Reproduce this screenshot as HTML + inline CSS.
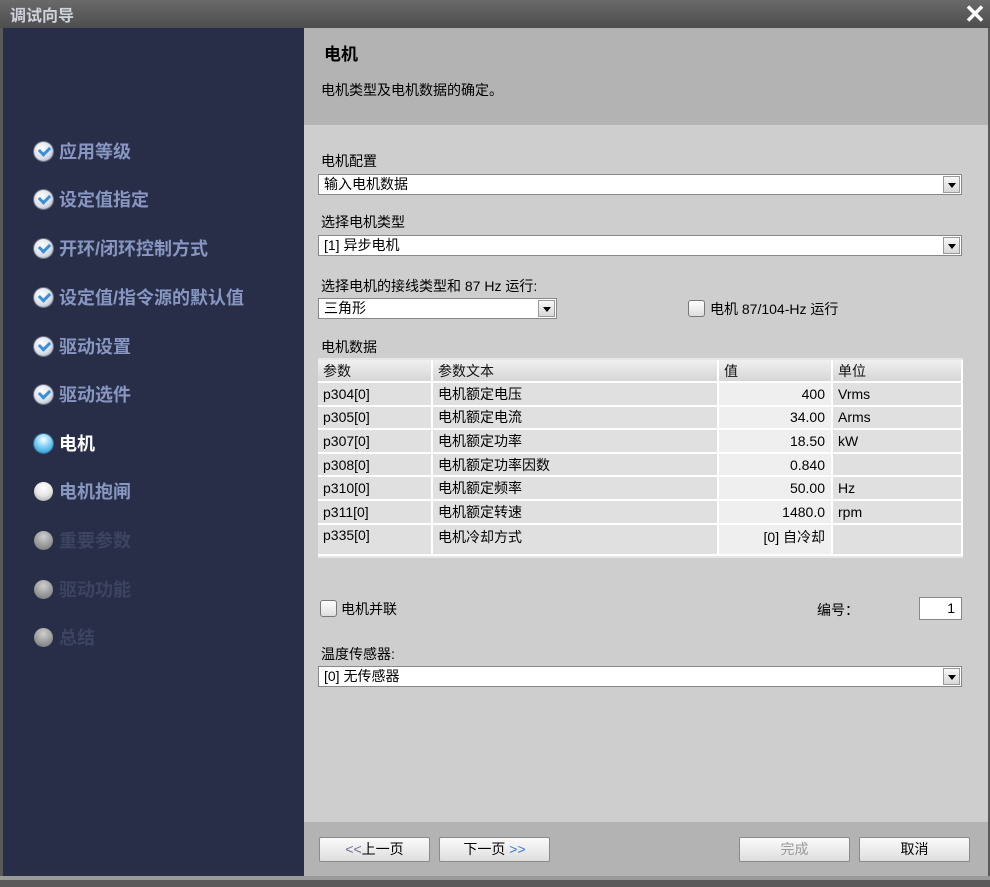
<!DOCTYPE html>
<html><head><meta charset="utf-8"><style>
*{margin:0;padding:0;box-sizing:border-box}
body{width:990px;height:887px;position:relative;overflow:hidden;background:#5a5a5a;font-family:"Liberation Sans","Noto Sans CJK SC",sans-serif;font-size:14px;color:#000}
.a{position:absolute}
.nav{position:absolute;left:34px;font-size:18px;font-weight:bold;color:#8797c2;display:flex;align-items:center;gap:6px}
.dot{width:19px;height:19px;border-radius:50%;display:inline-block;position:relative}
.ck{background:radial-gradient(circle at 40% 35%,#fff,#d8dde6 60%,#8c95a4);box-shadow:0 0 0 1px #6c7383}
.ck:after{content:"";position:absolute;left:5px;top:4px;width:8px;height:5px;border-left:3px solid #3a8fd8;border-bottom:3px solid #3a8fd8;transform:rotate(-45deg)}
.cur{background:radial-gradient(circle at 50% 30%,#fff,#7fd0f5 45%,#1b8ec9);box-shadow:0 0 0 1px #3a6c90}
.wh{background:radial-gradient(circle at 50% 30%,#fff,#e6e6e6 50%,#9a9a9a)}
.gr{background:radial-gradient(circle at 50% 30%,#cfcfcf,#9a9a9a 55%,#6f6f6f)}
.lbl{position:absolute;left:321px;font-size:14px}
.sel{position:absolute;background:#fff;border:1px solid #888;height:21px;font-size:14px;line-height:19px;padding-left:5px}
.sel i{position:absolute;right:1px;top:1px;width:17px;height:17px;background:linear-gradient(#f8f8f8,#d8d8d8);border:1px solid #999}
.sel i:after{content:"";position:absolute;left:4px;top:6px;border-left:4px solid transparent;border-right:4px solid transparent;border-top:5px solid #000}
.cb{position:absolute;width:17px;height:17px;border:1px solid #777;border-radius:3px;background:linear-gradient(#fff,#ddd)}
table{position:absolute;left:318px;top:360px;width:644px;border-collapse:collapse;font-size:14px;table-layout:fixed}
td,th{height:23.6px;padding:0 5px;font-weight:normal;text-align:left;border-right:2px solid #fff;border-bottom:2px solid #fff;white-space:nowrap}
th{background:linear-gradient(#f0f0f0,#d6d6d6);height:22px;color:#111}
tr td{background:#e0e0e0}
td.v{background:#efefef;text-align:right;padding-right:6px}
.btn{position:absolute;top:837px;height:25px;border:1px solid #8a8a8a;border-radius:2px;background:linear-gradient(#fafafa,#dedede);font-size:14px;text-align:center;line-height:23px}
</style></head><body>
<div class="a" style="left:0;top:0;width:990px;height:28px;background:linear-gradient(#6a6a6a,#4e4e4e)"></div>
<div class="a" style="left:10px;top:2px;font-size:16px;font-weight:bold;color:#cfd3dc">调试向导</div>
<div class="a" style="left:962px;top:2px;width:26px;height:24px;color:#fff;font-size:26px;line-height:24px;text-align:center;font-weight:bold">✕</div>
<div class="a" style="left:3px;top:28px;width:301px;height:848px;background:#282e47"></div>
<div class="a" style="left:304px;top:28px;width:684px;height:97px;background:#b3b3b3"></div>
<div class="a" style="left:304px;top:125px;width:684px;height:697px;background:#cecece"></div>
<div class="a" style="left:304px;top:822px;width:684px;height:54px;background:#b3b3b3"></div>
<div class="a" style="left:0;top:876px;width:990px;height:4px;background:#9a9a9a"></div>

<div class="nav" style="top:138px"><span class="dot ck"></span>应用等级</div>
<div class="nav" style="top:186px"><span class="dot ck"></span>设定值指定</div>
<div class="nav" style="top:235px"><span class="dot ck"></span>开环/闭环控制方式</div>
<div class="nav" style="top:284px"><span class="dot ck"></span>设定值/指令源的默认值</div>
<div class="nav" style="top:333px"><span class="dot ck"></span>驱动设置</div>
<div class="nav" style="top:381px"><span class="dot ck"></span>驱动选件</div>
<div class="nav" style="top:430px;color:#fff"><span class="dot cur"></span>电机</div>
<div class="nav" style="top:478px"><span class="dot wh"></span>电机抱闸</div>
<div class="nav" style="top:527px;color:#3c4462"><span class="dot gr"></span>重要参数</div>
<div class="nav" style="top:576px;color:#3c4462"><span class="dot gr"></span>驱动功能</div>
<div class="nav" style="top:624px;color:#3c4462"><span class="dot gr"></span>总结</div>

<div class="a" style="left:324px;top:40px;font-size:17px;font-weight:bold">电机</div>
<div class="a" style="left:321px;top:80px;font-size:14px">电机类型及电机数据的确定。</div>

<div class="lbl" style="top:151px">电机配置</div>
<div class="sel" style="left:318px;top:174px;width:644px">输入电机数据<i></i></div>
<div class="lbl" style="top:212px">选择电机类型</div>
<div class="sel" style="left:318px;top:235px;width:644px">[1] 异步电机<i></i></div>
<div class="lbl" style="top:276px">选择电机的接线类型和 87 Hz 运行:</div>
<div class="sel" style="left:318px;top:298px;width:239px">三角形<i></i></div>
<div class="cb" style="left:688px;top:300px"></div>
<div class="a" style="left:710px;top:299px">电机 87/104-Hz 运行</div>
<div class="lbl" style="top:337px">电机数据</div>
<div class="a" style="left:318px;top:358px;width:645px;height:200px;background:#e6e6e6"></div>
<table>
<colgroup><col style="width:114px"><col style="width:286px"><col style="width:114px"><col style="width:130px"></colgroup>
<tr><th>参数</th><th>参数文本</th><th>值</th><th>单位</th></tr>
<tr><td>p304[0]</td><td>电机额定电压</td><td class="v">400</td><td>Vrms</td></tr>
<tr><td>p305[0]</td><td>电机额定电流</td><td class="v">34.00</td><td>Arms</td></tr>
<tr><td>p307[0]</td><td>电机额定功率</td><td class="v">18.50</td><td>kW</td></tr>
<tr><td>p308[0]</td><td>电机额定功率因数</td><td class="v">0.840</td><td></td></tr>
<tr><td>p310[0]</td><td>电机额定频率</td><td class="v">50.00</td><td>Hz</td></tr>
<tr><td>p311[0]</td><td>电机额定转速</td><td class="v">1480.0</td><td>rpm</td></tr>
<tr><td style="height:31px;vertical-align:top;padding-top:2px">p335[0]</td><td style="vertical-align:top;padding-top:2px">电机冷却方式</td><td class="v" style="vertical-align:top;padding-top:2px">[0] 自冷却</td><td></td></tr>
</table>
<div class="cb" style="left:320px;top:600px"></div>
<div class="a" style="left:341px;top:599px">电机并联</div>
<div class="a" style="left:817px;top:600px">编号：</div>
<div class="a" style="left:919px;top:597px;width:43px;height:23px;background:#fff;border:1px solid #888;text-align:right;padding-right:6px;line-height:21px">1</div>
<div class="lbl" style="top:644px">温度传感器:</div>
<div class="sel" style="left:318px;top:666px;width:644px">[0] 无传感器<i></i></div>

<div class="btn" style="left:319px;width:111px"><span style="color:#7a6a9a">&lt;&lt;</span>上一页</div>
<div class="btn" style="left:439px;width:111px">下一页 <span style="color:#3a7ad0">&gt;&gt;</span></div>
<div class="btn" style="left:739px;width:111px;color:#999">完成</div>
<div class="btn" style="left:859px;width:111px">取消</div>
</body></html>
